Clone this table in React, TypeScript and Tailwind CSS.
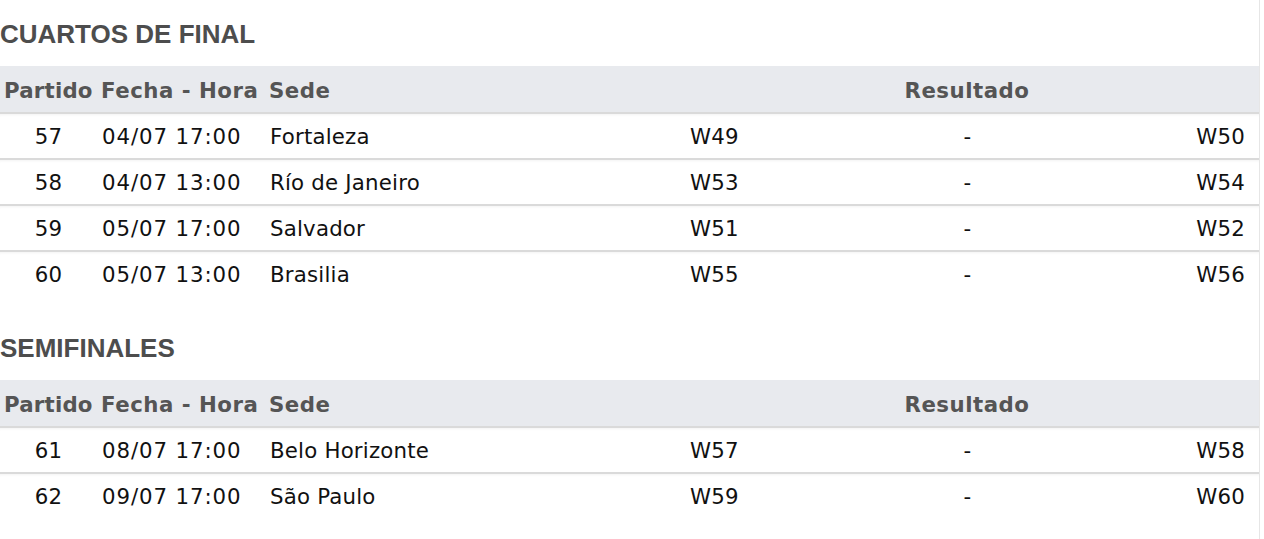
import React from 'react';

type Match = {
  id: number;
  date: string;
  venue: string;
  home: string;
  away: string;
};

const quarterFinals: Match[] = [
  { id: 57, date: '04/07 17:00', venue: 'Fortaleza', home: 'W49', away: 'W50' },
  { id: 58, date: '04/07 13:00', venue: 'Río de Janeiro', home: 'W53', away: 'W54' },
  { id: 59, date: '05/07 17:00', venue: 'Salvador', home: 'W51', away: 'W52' },
  { id: 60, date: '05/07 13:00', venue: 'Brasilia', home: 'W55', away: 'W56' },
];

const semiFinals: Match[] = [
  { id: 61, date: '08/07 17:00', venue: 'Belo Horizonte', home: 'W57', away: 'W58' },
  { id: 62, date: '09/07 17:00', venue: 'São Paulo', home: 'W59', away: 'W60' },
];

function RoundTable({ title, matches, className = '' }: { title: string; matches: Match[]; className?: string }) {
  return (
    <section className={className}>
      <h2 className="pt-[19px] pb-[17px] text-[26px] leading-[30px] font-bold text-[#4d4d4d] font-['Liberation_Sans',Arial,sans-serif]">
        {title}
      </h2>

      {/* Header */}
      <div className="flex h-[46px] items-center pt-[3px] bg-[#e8eaee] text-[21.3px] font-bold tracking-[0.5px] text-[#555555]">
        <div className="w-[97px] pl-[4px] tracking-[0.2px]">Partido</div>
        <div className="w-[168px] pl-[4px]">Fecha - Hora</div>
        <div className="w-[410px] pl-[4px]">Sede</div>
        <div className="flex-1 text-center">Resultado</div>
      </div>

      {/* Rows */}
      {matches.map((m) => (
        <div
          key={m.id}
          className="flex h-[46px] items-center pt-[2px] border-t-2 border-[#dadada] shadow-[inset_0_3px_3px_-2px_rgba(0,0,0,0.05)] text-[21.3px] tracking-[0.2px] text-[#111111]"
        >
          <div className="w-[97px] text-center">{m.id}</div>
          <div className="w-[168px] pl-[5px] tracking-[0.9px]">{m.date}</div>
          <div className="w-[410px] pl-[5px]">{m.venue}</div>
          <div className="w-[185px] pl-[15px]">{m.home}</div>
          <div className="w-[215px] text-center">-</div>
          <div className="flex-1 pr-[14px] text-right">{m.away}</div>
        </div>
      ))}
    </section>
  );
}

export default function App() {
  return (
    <div className="min-h-[539px] w-[1260px] bg-white border-r border-[#e6e6e6] font-['DejaVu_Sans',Verdana,sans-serif]">
      <RoundTable title="CUARTOS DE FINAL" matches={quarterFinals} />
      <RoundTable title="SEMIFINALES" matches={semiFinals} className="mt-[18px]" />
    </div>
  );
}
